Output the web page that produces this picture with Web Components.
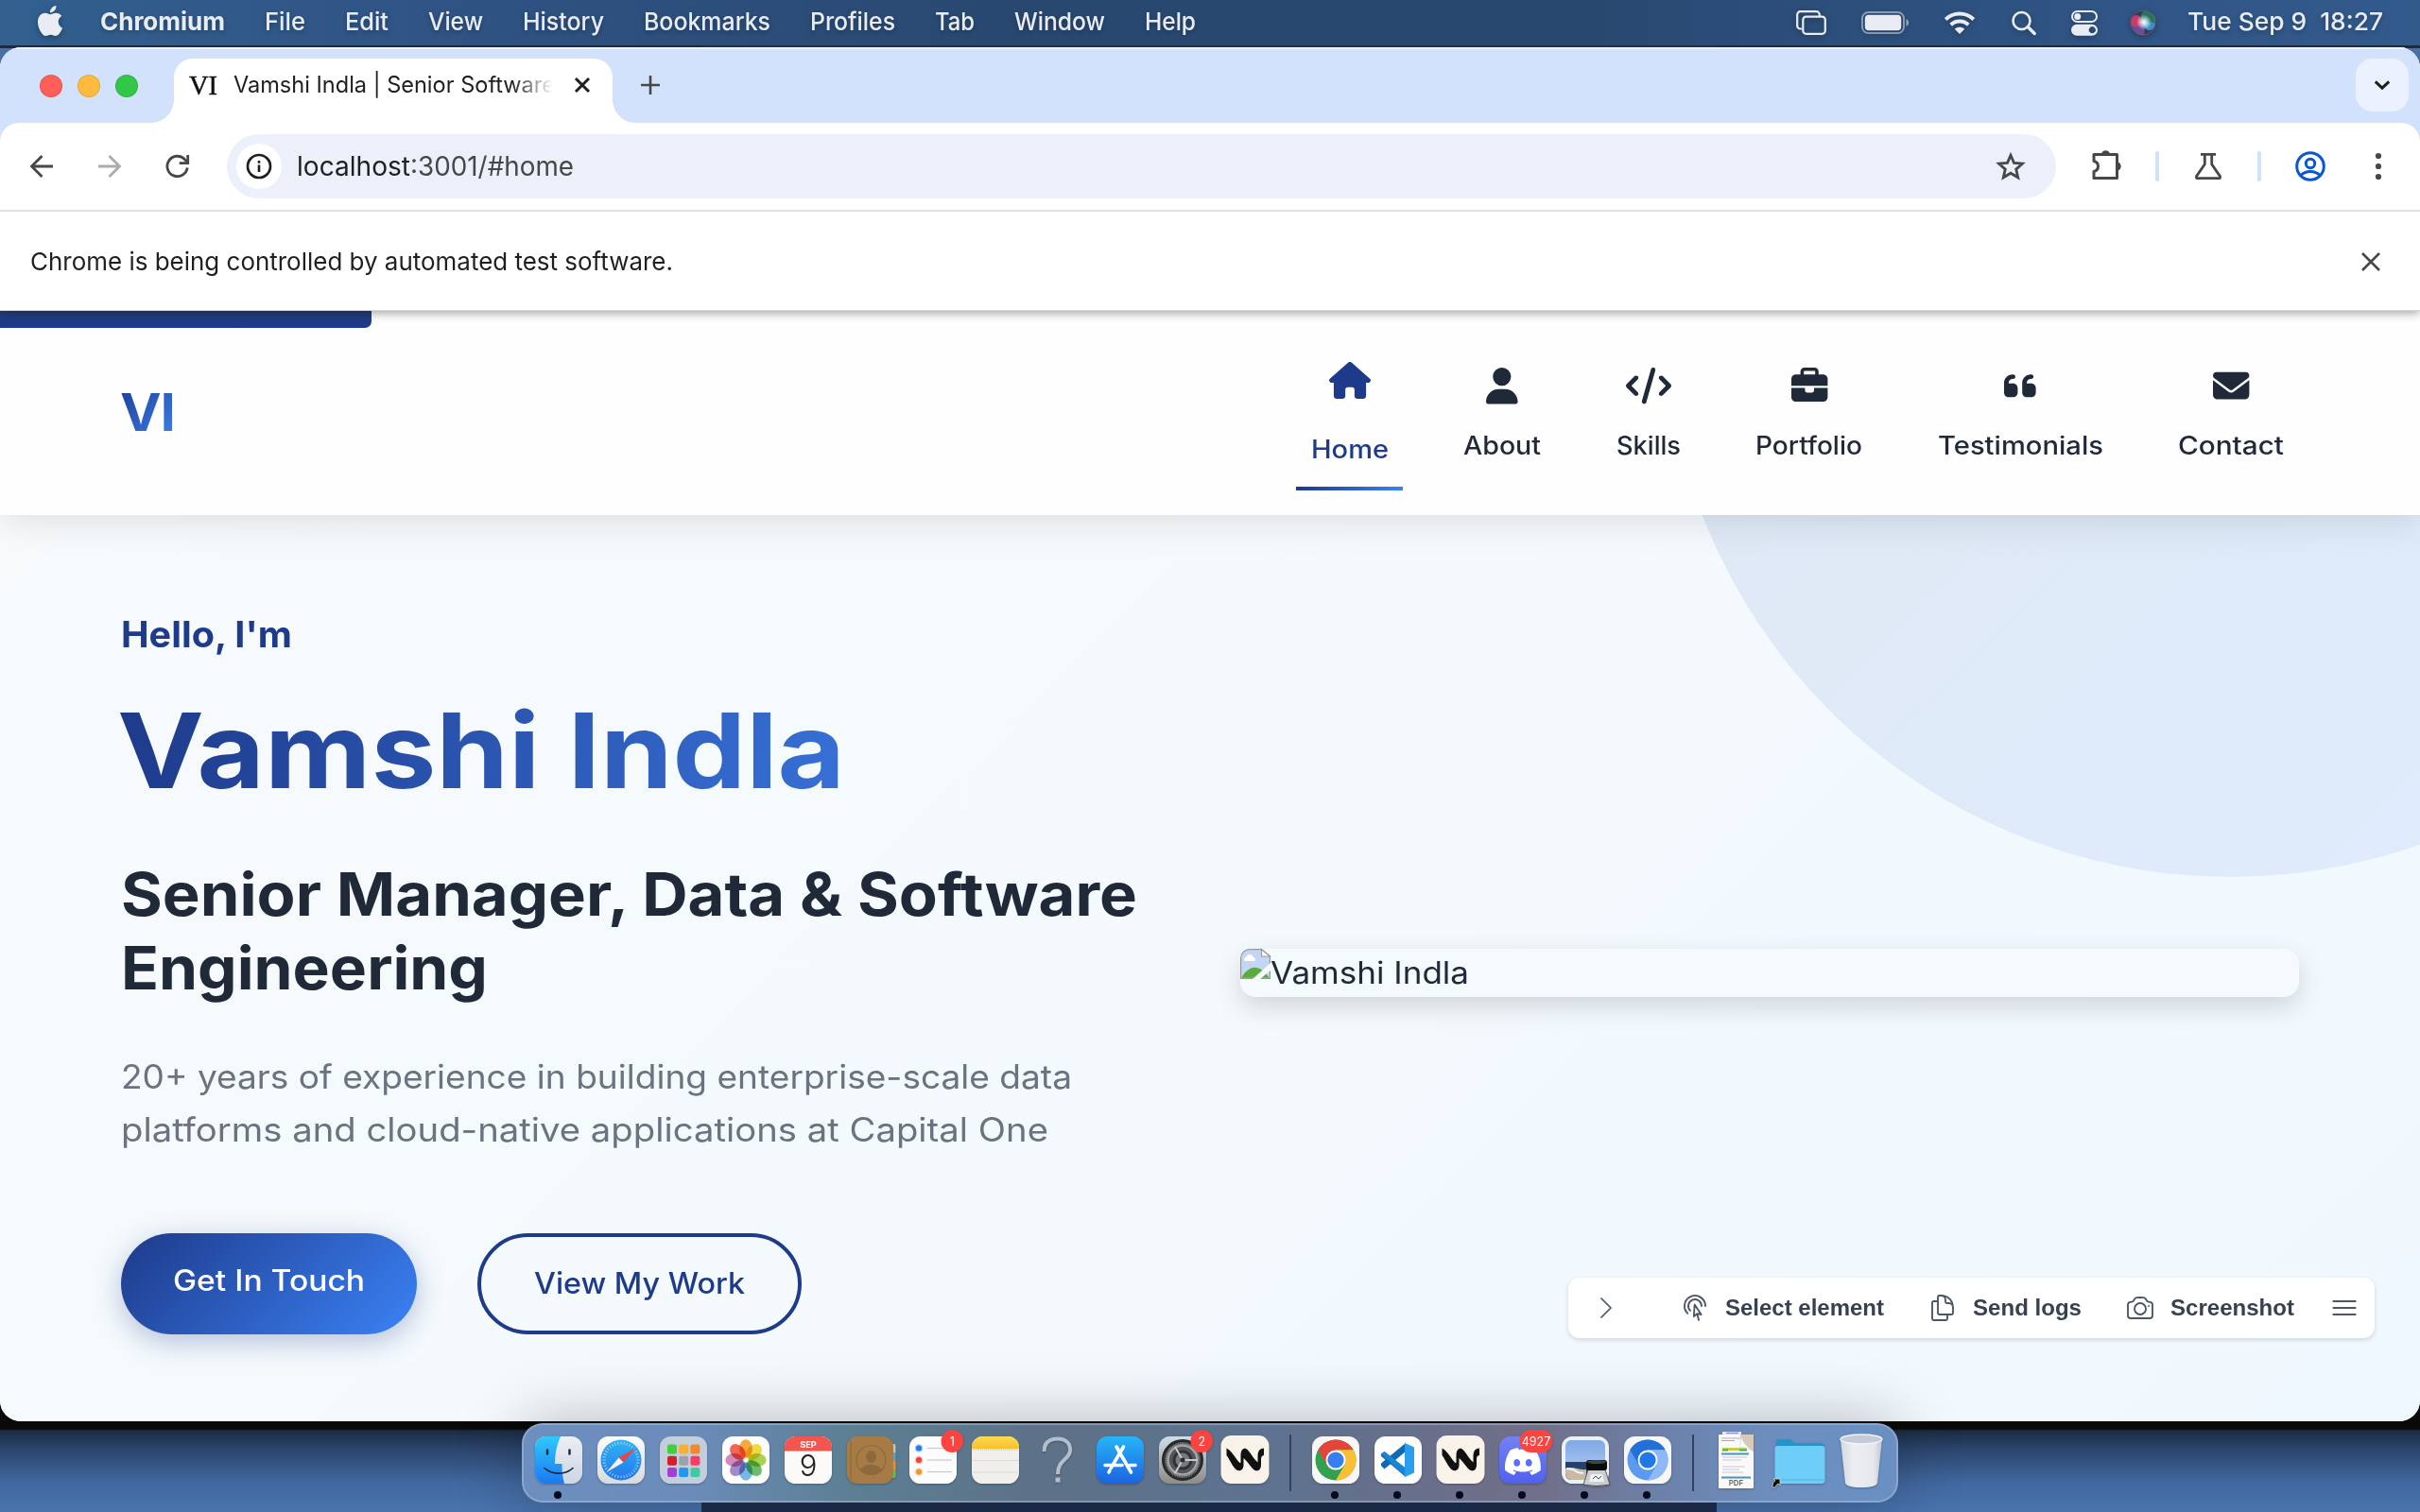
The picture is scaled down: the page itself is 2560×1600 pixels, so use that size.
<!DOCTYPE html>
<html lang="en">
<head>
<meta charset="utf-8">
<title>Vamshi Indla | Senior Software</title>
<style>
html,body{margin:0;width:2560px;height:1600px;overflow:hidden;font-family:Inter,"Liberation Sans",sans-serif}
</style>
</head>
<body>
<desk-top></desk-top>
<script>
const define = (name, html, setup) => customElements.define(name, class extends HTMLElement {
  connectedCallback() {
    if (this.shadowRoot) return;
    const root = this.attachShadow({mode: 'open'});
    root.innerHTML = typeof html === 'function' ? html(this) : html;
    if (setup) setup(this, root);
  }
});

const st = (d, w = 2, extra = '') => `<path d="${d}" fill="none" stroke="currentColor" stroke-width="${w}" ${extra}/>`;
const fl = d => `<path d="${d}" fill="currentColor"/>`;
const rr = 'stroke-linecap="round" stroke-linejoin="round"';
const ICONS = {
  apple: ['0 0 24 24', fl('M12.152 6.896c-.948 0-2.415-1.078-3.96-1.04-2.04.027-3.91 1.183-4.961 3.014-2.117 3.675-.546 9.103 1.519 12.09 1.013 1.454 2.208 3.09 3.792 3.039 1.52-.065 2.09-.987 3.935-.987 1.831 0 2.35.987 3.96.948 1.637-.026 2.676-1.48 3.676-2.948 1.156-1.688 1.636-3.325 1.662-3.415-.039-.013-3.182-1.221-3.22-4.857-.026-3.04 2.48-4.494 2.597-4.559-1.429-2.09-3.623-2.324-4.39-2.376-2-.156-3.675 1.09-4.61 1.09zM15.53 3.83c.843-1.012 1.4-2.427 1.245-3.83-1.207.052-2.662.805-3.532 1.818-.78.896-1.454 2.338-1.273 3.714 1.338.104 2.715-.688 3.559-1.701')],
  screens: ['0 0 32 26', st('M6 19.5H4.5a3.3 3.3 0 0 1-3.3-3.3V4.500a3.300 3.300 0 0 1 3.300-3.300h17a3.300 3.300 0 0 1 3.300 3.300V6', 2.2) + '<rect x="7.300" y="6.600" width="23.500" height="18.200" rx="3.300" fill="none" stroke="currentColor" stroke-width="2.200"/>'],
  battery: ['0 0 52 24', '<rect x="1" y="1" width="44" height="22" rx="6.500" fill="none" stroke="currentColor" stroke-width="2" opacity=".5"/><rect x="3.800" y="3.800" width="38.400" height="16.400" rx="4" fill="currentColor"/><path d="M47.500 8v8c3.500-1.500 3.500-6.500 0-8z" fill="currentColor" opacity=".55"/>'],
  wifi: ['0 0 34 25', st('M2.200 9.500c8.200-8 21.400-8 29.600 0', 4) + st('M7.700 15.200c5.200-5 13.400-5 18.600 0', 4) + fl('M17 25l-5.200-5.300c2.900-2.600 7.500-2.600 10.400 0z')],
  search: ['0 0 28 27', '<circle cx="11.500" cy="11" r="9" fill="none" stroke="currentColor" stroke-width="2.600"/>' + st('M18.200 17.500l7 7', 3.400, rr)],
  control: ['0 0 28 27', '<rect x="1" y="1" width="26" height="11" rx="5.500" fill="none" stroke="currentColor" stroke-width="2"/><circle cx="6.700" cy="6.500" r="3.500" fill="currentColor"/><path fill-rule="evenodd" d="M6 14.700h16a6 6 0 0 1 0 12H6a6 6 0 0 1 0-12zm16.300 2.400a3.600 3.600 0 1 0 .01 0z" fill="currentColor"/>'],
  siri: ['0 0 28 28', '<defs><radialGradient id="s"><stop offset="0" stop-color="#fff"/><stop offset=".3" stop-color="#dff" stop-opacity=".8"/><stop offset="1" stop-color="#fff" stop-opacity="0"/></radialGradient></defs><circle cx="14" cy="14" r="13.500" fill="#2b3f5c"/><path d="M14 14C10 2 3 5 .8 13c1 8 8 9 13.200 1z" fill="#c93a68"/><path d="M14 14C9 4 14 0 20 2.500c8 3 9 9 6 12.500-5 1-9 0-12-1z" fill="#27735f"/><path d="M14 14c10-1 13 0 13 2-3 9-11 8-13-2z" fill="#3b8fc8"/><path d="M14 14c3 8 2 13-1 13C6 26 3 20 2.500 18c5 1 9 0 11.500-4z" fill="#6d4d96"/><circle cx="15" cy="13.500" r="8" fill="url(#s)"/><circle cx="14" cy="14" r="13" fill="none" stroke="#8d5a80" opacity=".8"/>'],
  x: ['0 0 20 20', st('M3 3l14 14M17 3L3 17', 3)],
  xthin: ['0 0 20 20', st('M1 1l18 18M19 1L1 19', 2.600)],
  plus: ['0 0 22 22', st('M11 1v20M1 11h20', 2.600)],
  down: ['0 0 20 14', st('M2 2.500l8 7.500 8-7.500', 3.400)],
  back: ['0 0 26 26', st('M25 13H3M13.500 2L2.500 13l11 11', 2.800)],
  fwd: ['0 0 26 26', st('M1 13h22M12.500 2l11 11-11 11', 2.800)],
  reload: ['0 0 26 26', st('M23.200 14.500A10.700 10.700 0 1 1 20.500 5.700L23 8.200', 2.800) + st('M23.700 1v8.600h-9', 2.800)],
  info: ['0 0 28 28', '<circle cx="14" cy="14" r="12" fill="none" stroke="currentColor" stroke-width="2.700"/>' + fl('M12.700 12.500h2.600V20h-2.600zM12.700 8h2.600v2.700h-2.600z')],
  star: ['0 0 32 32', st('M16 4.200l3.500 8.200 8.900.800-6.700 5.900 2 8.700L16 23.200l-7.700 4.600 2-8.700-6.700-5.900 8.900-.800z', 2.800)],
  puzzle: ['0 0 34 34', st('M3 6.500h24.500v25H3V24.500c6-1.500 6-9.500 0-11z', 3, 'stroke-linejoin="round"') + fl('M11 6a4.600 4.600 0 0 1 9 0zM28 14.500a4.600 4.600 0 0 1 0 9z')],
  flask: ['0 0 30 30', st('M7 2.300h16M11.300 2.500v10.200L2.600 25.500q-.8 2.200 1.400 2.200h22q2.200 0 1.400-2.200L18.700 12.700V2.500', 2.800)],
  profile: ['0 0 32 32', '<circle cx="16" cy="16" r="14.300" fill="none" stroke="currentColor" stroke-width="3"/><circle cx="16" cy="13" r="4.700" fill="none" stroke="currentColor" stroke-width="3"/>' + st('M6 25.500c5-5.500 15-5.500 20 0', 3)],
  dots: ['0 0 8 30', '<g fill="currentColor"><circle cx="4" cy="4" r="3.100"/><circle cx="4" cy="15" r="3.100"/><circle cx="4" cy="26" r="3.100"/></g>'],
  home: ['0 0 576 512', fl('M575.8 255.5c0 18-15 32.1-32 32.1h-32l.7 160.2c0 2.700-.2 5.400-.5 8.100V472c0 22.100-17.900 40-40 40H456c-1.100 0-2.200 0-3.300-.1c-1.400 .1-2.800 .1-4.200 .1H416 392c-22.100 0-40-17.900-40-40V448 384c0-17.700-14.300-32-32-32H256c-17.700 0-32 14.300-32 32v64 24c0 22.100-17.900 40-40 40H160 128.100c-1.500 0-3-.1-4.500-.2c-1.200 .1-2.400 .2-3.600 .2H104c-22.100 0-40-17.900-40-40V360c0-.9 0-1.900 .1-2.800V287.600H32c-18 0-32-14-32-32.100c0-9 3-17 10-24L266.400 8c7-7 15-8 22-8s15 2 21 7L564.800 231.500c8 7 12 15 11 24z')],
  user: ['0 0 448 512', fl('M224 256A128 128 0 1 0 224 0a128 128 0 1 0 0 256zm-45.7 48C79.8 304 0 383.8 0 482.300C0 498.700 13.300 512 29.700 512H418.300c16.400 0 29.700-13.300 29.700-29.700C448 383.800 368.200 304 269.700 304H178.300z')],
  code: ['0 0 640 512', fl('M392.8 1.2c-17-4.9-34.7 5-39.6 22l-128 448c-4.900 17 5 34.700 22 39.600s34.700-5 39.600-22l128-448c4.900-17-5-34.700-22-39.600zm80.600 120.100c-12.500 12.500-12.500 32.800 0 45.300L562.700 256l-89.400 89.400c-12.500 12.500-12.500 32.800 0 45.300s32.800 12.500 45.300 0l112-112c12.500-12.500 12.500-32.800 0-45.300l-112-112c-12.500-12.500-32.800-12.500-45.300 0zm-306.700 0c-12.500-12.500-32.800-12.500-45.300 0l-112 112c-12.500 12.500-12.500 32.800 0 45.300l112 112c12.500 12.500 32.800 12.500 45.300 0s12.500-32.800 0-45.300L77.300 256l89.400-89.400c12.500-12.500 12.500-32.800 0-45.300z')],
  briefcase: ['0 0 512 512', fl('M184 48H328c4.400 0 8 3.600 8 8V96H176V56c0-4.400 3.600-8 8-8zm-56 8V96H64C28.700 96 0 124.700 0 160v96H192 320 512V160c0-35.300-28.700-64-64-64H384V56c0-30.900-25.100-56-56-56H184c-30.900 0-56 25.100-56 56zM512 288H320v32c0 17.700-14.300 32-32 32H224c-17.700 0-32-14.300-32-32V288H0V416c0 35.300 28.700 64 64 64H448c35.300 0 64-28.700 64-64V288z')],
  quote: ['0 0 448 512', fl('M0 216C0 149.700 53.700 96 120 96h8c17.700 0 32 14.300 32 32s-14.300 32-32 32h-8c-30.900 0-56 25.100-56 56v8h64c35.300 0 64 28.700 64 64v64c0 35.300-28.700 64-64 64H64c-35.300 0-64-28.700-64-64V320 288 216zm256 0c0-66.300 53.700-120 120-120h8c17.700 0 32 14.300 32 32s-14.300 32-32 32h-8c-30.900 0-56 25.100-56 56v8h64c35.300 0 64 28.700 64 64v64c0 35.300-28.700 64-64 64H320c-35.300 0-64-28.700-64-64V320 288 216z')],
  mail: ['0 0 512 512', fl('M48 64C21.500 64 0 85.500 0 112c0 15.100 7.100 29.300 19.200 38.400L236.800 313.600c11.400 8.500 27 8.500 38.400 0L492.800 150.400c12.100-9.100 19.200-23.300 19.200-38.400c0-26.500-21.500-48-48-48H48zM0 176V384c0 35.300 28.700 64 64 64H448c35.300 0 64-28.700 64-64V176L294.400 339.200c-22.800 17.100-54 17.100-76.800 0L0 176z')],
  chev: ['0 0 24 24', st('M8.250 4.500l7.500 7.500-7.500 7.500', 1.300, rr)],
  cursor: ['0 0 24 24', st('M15.042 21.672 13.684 16.600m0 0-2.510 2.225.569-9.470 5.227 7.917-3.286-.672Zm-7.518-.267A8.250 8.250 0 1 1 20.250 10.500M8.288 14.212A5.250 5.250 0 1 1 17.250 10.500', 1.400, rr)],
  docs: ['0 0 24 24', st('M15.750 17.250v3.375c0 .621-.504 1.125-1.125 1.125h-9.750a1.125 1.125 0 0 1-1.125-1.125V7.875c0-.621.504-1.125 1.125-1.125H6.750a9.060 9.060 0 0 1 1.500.124m7.500 10.376h3.375c.621 0 1.125-.504 1.125-1.125V11.250c0-4.460-3.243-8.161-7.500-8.876a9.060 9.060 0 0 0-1.500-.124H9.375c-.621 0-1.125.504-1.125 1.125v3.500m7.500 10.375H9.375a1.125 1.125 0 0 1-1.125-1.125v-9.250m12 6.625v-1.875a3.375 3.375 0 0 0-3.375-3.375h-1.500a1.125 1.125 0 0 1-1.125-1.125v-1.500a3.375 3.375 0 0 0-3.375-3.375H9.750', 1.400, rr)],
  camera: ['0 0 24 24', st('M6.827 6.175A2.310 2.310 0 0 1 5.186 7.230c-.380.054-.757.112-1.134.175C2.999 7.580 2.250 8.507 2.250 9.574V18a2.250 2.250 0 0 0 2.250 2.250h15A2.250 2.250 0 0 0 21.750 18V9.574c0-1.067-.750-1.994-1.802-2.169a47.865 47.865 0 0 0-1.134-.175 2.310 2.310 0 0 1-1.640-1.055l-.822-1.316a2.192 2.192 0 0 0-1.736-1.039 48.774 48.774 0 0 0-5.232 0 2.192 2.192 0 0 0-1.736 1.039l-.821 1.316ZM16.500 12.750a4.500 4.500 0 1 1-9 0 4.500 4.500 0 0 1 9 0ZM18.750 10.500h.008v.008h-.008V10.500Z', 1.400, rr)],
  menu: ['0 0 24 24', st('M3.300 6.750h17.400M3.300 12h17.400M3.300 17.250h17.400', 1.500, rr)],
  broken: ['0 0 32 32', '<path d="M.6 10A9.400 9.400 0 0 1 10 .6h12.500L31.400 8v23.400H.6z" fill="#c4d6f5" stroke="#9a9a9a" stroke-width="1.200"/><path d="M4.500 13c-1.500-3 1-4.500 2-4 0-4 7-4 7 0 3-.5 3.500 4 1 4z" fill="#fff"/><path d="M1.200 30.800C9 17 20 15 30.800 30.800z" fill="#5aab3c"/><path d="M22.500.6V8h8.900z" fill="#fff" stroke="#9a9a9a" stroke-width="1.200"/><path d="M13 32L32 15v8L21 32z" fill="#f6fafd"/>'],
};
define('ui-icon', el => {
  const [vb, body] = ICONS[el.getAttribute('name')];
  return `<style>:host{display:block;flex:none;line-height:0}svg{display:block;overflow:visible}</style><svg width="${el.getAttribute('w')}" height="${el.getAttribute('h')}" viewBox="${vb}">${body}</svg>`;
});

/* Single line of text set to an exact measure. */
define('fit-text', `<style>:host{display:block;flex:none;white-space:pre}
span{display:inline-block;white-space:pre;transform-origin:0 50%}
:host([grad]) span{background:var(--grad);-webkit-background-clip:text;background-clip:text;color:transparent}</style><span><slot></slot></span>`, (el, root) => {
  const w = +el.getAttribute('w'), span = root.querySelector('span');
  const natural = span.getBoundingClientRect().width;
  el.style.width = w + 'px';
  if (natural) span.style.transform = `scaleX(${w / natural})`;
});

define('menu-bar', `<style>:host{display:flex;align-items:center;height:48px;padding:0 39px 0 37px;box-sizing:border-box;color:#e9edf3;font-size:26px;line-height:44px;
background:linear-gradient(90deg,#32608f 0,#305587 15%,#294870 42%,#294870 65%,#305687 88%,#335a8c 100%);text-shadow:0 2px 5px rgba(0,0,0,.3)}
.m,.r{display:flex;align-items:center}.m{gap:42px;margin:-2px 0 0 37px;font-weight:500}.m :first-child{font-weight:700}.r{margin-left:auto}
ui-icon{filter:drop-shadow(0 2px 3px rgba(0,0,0,.3))}</style>
<ui-icon name="apple" w="32" h="32" style="margin-top:-4px"></ui-icon>
<div class="m"><fit-text w="132">Chromium</fit-text><fit-text w="43">File</fit-text><fit-text w="46">Edit</fit-text><fit-text w="58">View</fit-text><fit-text w="86">History</fit-text><fit-text w="134">Bookmarks</fit-text><fit-text w="90">Profiles</fit-text><fit-text w="42">Tab</fit-text><fit-text w="96">Window</fit-text><fit-text w="54">Help</fit-text></div>
<div class="r"><ui-icon name="screens" w="32" h="26"></ui-icon><ui-icon name="battery" w="52" h="24" style="margin-left:37px"></ui-icon><ui-icon name="wifi" w="34" h="25" style="margin:-2px 0 0 35px"></ui-icon><ui-icon name="search" w="28" h="27" style="margin-left:37px"></ui-icon><ui-icon name="control" w="28" h="27" style="margin-left:36px"></ui-icon><ui-icon name="siri" w="28" h="28" style="margin-left:34px"></ui-icon><fit-text w="207" style="margin:-2px 0 0 33px;font-weight:500">Tue Sep 9  18:27</fit-text></div>`);

define('tab-strip', `<style>:host{display:flex;height:80px;box-sizing:border-box;padding:12px 12px 0 42px;background:#d3e2fc;box-shadow:inset 0 2px #eef4fe;align-items:flex-start}
.l{display:flex;gap:16px;padding-top:17px;width:142px}.l i{width:24px;height:24px;border-radius:50%;box-sizing:border-box;border:1px solid rgba(0,0,0,.1)}
.tab{position:relative;width:464px;height:68px;background:#fff;border-radius:20px 20px 0 0;display:flex;align-items:center;box-sizing:border-box;padding:0 22px 12px 16px;line-height:40px}
.tab:before,.tab:after{content:"";position:absolute;bottom:0;width:24px;height:24px}
.tab:before{left:-24px;background:radial-gradient(circle at 0 0,transparent 23.500px,#fff 24px)}.tab:after{right:-24px;background:radial-gradient(circle at 100% 0,transparent 23.500px,#fff 24px)}
.fav{font:30px "Liberation Serif",serif;line-height:40px;color:#111;-webkit-text-stroke:.5px #111}
.t{margin-left:17px;font-size:24px;color:#1f1f1f;-webkit-mask:linear-gradient(90deg,#000 295px,transparent 338px);mask:linear-gradient(90deg,#000 295px,transparent 338px)}
.s{margin-left:auto;width:56px;height:56px;border-radius:18px;background:#ebf2fe;display:flex;align-items:center;justify-content:center;color:#1f1f1f}</style>
<div class="l"><i style="background:#fe5f58"></i><i style="background:#febb3e"></i><i style="background:#32c748"></i></div>
<div class="tab"><fit-text class="fav" w="30">VI</fit-text><div class="t"><fit-text w="340">Vamshi Indla | Senior Software</fit-text></div><ui-icon name="x" w="20" h="20" style="margin-left:auto;color:#1f1f1f"></ui-icon></div>
<ui-icon name="plus" w="22" h="22" style="margin:17px 0 0 29px;color:#474747"></ui-icon>
<div class="s"><ui-icon name="down" w="18" h="13"></ui-icon></div>`);

define('tool-bar', `<style>:host{display:block;background:#d3e2fc}
.b{display:flex;align-items:center;height:94px;box-sizing:border-box;border-bottom:2px solid #dfe1e3;background:#fff;border-radius:20px 20px 0 0;padding:0 40px 0 31px;color:#474747}
.o{display:flex;align-items:center;width:1936px;height:68px;border-radius:34px;background:#ecf0fa;margin-left:39px;box-sizing:border-box;padding:0 32px 0 10px}
.c{width:48px;height:48px;border-radius:50%;background:#fff;display:flex;align-items:center;justify-content:center;color:#1f1f1f}
.u{display:flex;margin-left:16px;font-size:28px;line-height:48px}
hr{width:4px;height:32px;border:0;border-radius:2px;background:#d0e1fb;margin:0}</style>
<div class="b"><ui-icon name="back" w="26" h="26"></ui-icon><ui-icon name="fwd" w="26" h="26" style="margin-left:46px;color:#acacac"></ui-icon><ui-icon name="reload" w="26" h="26" style="margin-left:46px"></ui-icon>
<div class="o"><div class="c"><ui-icon name="info" w="28" h="28"></ui-icon></div><div class="u"><fit-text w="120" style="color:#1f1f1f">localhost</fit-text><fit-text w="173">:3001/#home</fit-text></div><ui-icon name="star" w="32" h="32" style="margin-left:auto"></ui-icon></div>
<ui-icon name="puzzle" w="34" h="34" style="margin:-4px 0 0 37px"></ui-icon><hr style="margin-left:34px"><ui-icon name="flask" w="30" h="30" style="margin-left:37px"></ui-icon><hr style="margin-left:37px"><ui-icon name="profile" w="32" h="32" style="margin-left:36px;color:#0b57d0"></ui-icon><ui-icon name="dots" w="8" h="30" style="margin-left:52px"></ui-icon></div>`);

define('info-bar', `<style>:host{display:flex;position:relative;z-index:3;height:105px;margin-bottom:-1px;box-sizing:border-box;align-items:center;justify-content:space-between;padding:2px 42px 0 32px;background:#fff;font-size:26px;line-height:40px;color:#1f1f1f;border-bottom:1px solid #d4d6d8;box-shadow:0 2px 10px rgba(0,0,0,.38);clip-path:inset(0 0 -20px 0)}</style>
<fit-text w="680">Chrome is being controlled by automated test software.</fit-text><ui-icon name="xthin" w="20" h="20" style="color:#474747"></ui-icon>`);

define('nav-item', el => `<style>:host{display:flex;flex-direction:column;align-items:center;width:${el.getAttribute('box')}px;padding-top:56px;color:#1f2937;font-size:26.500px;font-weight:550;line-height:32px}
.i{height:48px;display:flex;align-items:center;margin-bottom:22.500px}
:host([active]){padding-top:50.500px;color:#1e3a8a}:host([active]) .i{margin-bottom:32px}
:host([active]):after{content:"";width:100%;height:4px;margin-top:24.500px;background:linear-gradient(90deg,#1e3a8a,#3b82f6)}</style>
<div class="i"><ui-icon name="${el.getAttribute('icon')}" w="${el.getAttribute('iw')}" h="${el.hasAttribute('active') ? 39 : 38.4}"></ui-icon></div><fit-text w="${el.getAttribute('tw')}">${el.getAttribute('label')}</fit-text>`);

define('site-header', `<style>:host{display:flex;position:relative;z-index:2;height:217px;box-sizing:border-box;padding:0 128px;justify-content:space-between;background:#fefefe;box-shadow:0 4px 40px rgba(0,0,0,.12)}
.p{position:absolute;left:0;top:0;width:393px;height:19px;background:linear-gradient(#263f7c,#1e3a8a);border-radius:0 0 7px 0}
.logo{--grad:linear-gradient(135deg,#1f3f93,#3b80f0);font-size:55px;font-weight:750;line-height:56px;margin:80px 0 0 -1px;letter-spacing:-1px}
nav{display:flex;gap:47.400px;align-items:flex-start}</style>
<div class="p"></div><fit-text class="logo" grad w="58">VI</fit-text>
<nav><nav-item active box="113" icon="home" iw="44" tw="82" label="Home"></nav-item><nav-item box="115" icon="user" iw="33.600" tw="82" label="About"></nav-item><nav-item box="100" icon="code" iw="48" tw="68" label="Skills"></nav-item><nav-item box="145" icon="briefcase" iw="38.400" tw="113" label="Portfolio"></nav-item><nav-item box="207" icon="quote" iw="33.600" tw="175" label="Testimonials"></nav-item><nav-item box="144" icon="mail" iw="38.400" tw="112" label="Contact"></nav-item></nav>`);

define('pill-button', `<style>:host{display:flex;box-sizing:border-box;height:107px;border-radius:54px;align-items:center;justify-content:center;font-size:31px;font-weight:550;line-height:40px;width:343px;border:4px solid #1e3a8a;color:#1e3a8a}
:host([primary]){width:313px;border:0;padding-bottom:6px;color:#fff;background:linear-gradient(135deg,#1e3a8a,#3b82f6);box-shadow:0 8px 30px rgba(30,58,138,.3)}</style><slot></slot>`);

define('hero-section', `<style>:host{display:flex;position:relative;flex:1;padding:0 128px;background:linear-gradient(135deg,#f8fafc,#f5fafd 35%,#f0f8ff);color:#1f2937;overflow:hidden}
.circle{position:absolute;left:1760px;top:-817px;width:1200px;height:1200px;border-radius:50%;background:linear-gradient(135deg,#1e3a8a,#3b82f6);opacity:.1}
.l{width:1184px;display:flex;flex-direction:column}
.h{margin-top:96px;font-size:38.500px;font-weight:650;line-height:60px;color:#1e3a8a}
.n{margin:33px 0 0 -4px;font-size:110px;font-weight:750;line-height:120px;--grad:linear-gradient(100deg,#1e3a8a,#3770d6)}
.s{font-size:63px;font-weight:650;line-height:77.500px;margin-top:54.200px}
.p{font-size:35px;line-height:56px;margin-top:48.300px;color:#6b7280}
.b{display:flex;gap:64px;margin-top:81.500px}
.img{position:relative;width:1120px;height:51px;margin-top:459px;border-radius:16px;box-shadow:0 10px 28px rgba(0,0,0,.15);background:#f5fafd;display:flex;font-size:32px;line-height:51px}</style>
<div class="circle"></div>
<div class="l"><fit-text class="h" w="181">Hello, I'm</fit-text><fit-text class="n" grad w="770">Vamshi Indla</fit-text>
<div class="s"><fit-text w="1075">Senior Manager, Data &amp; Software</fit-text><fit-text w="388">Engineering</fit-text></div>
<div class="p"><fit-text w="1006">20+ years of experience in building enterprise-scale data</fit-text><fit-text w="981">platforms and cloud-native applications at Capital One</fit-text></div>
<div class="b"><pill-button primary><fit-text w="203">Get In Touch</fit-text></pill-button><pill-button><fit-text w="223">View My Work</fit-text></pill-button></div></div>
<div class="img"><ui-icon name="broken" w="32" h="32"></ui-icon><fit-text w="210">Vamshi Indla</fit-text></div>`);

define('dev-toolbar', `<style>:host{position:absolute;z-index:4;left:1659px;top:1302px;width:853px;height:64px;box-sizing:border-box;padding:0 16px 0 24px;border-radius:12px;background:#fff;box-shadow:0 2px 5px rgba(0,0,0,.14);display:flex;align-items:center;color:#374151;font:bold 24px/40px "Liberation Sans",sans-serif}
ui-icon{color:#4b5563}</style>
<ui-icon name="chev" w="32" h="32"></ui-icon><ui-icon name="cursor" w="32" h="32" style="margin-left:62px"></ui-icon><fit-text w="168" style="margin-left:16px">Select element</fit-text><ui-icon name="docs" w="32" h="32" style="margin-left:46px"></ui-icon><fit-text w="115" style="margin-left:16px">Send logs</fit-text><ui-icon name="camera" w="32" h="32" style="margin-left:46px"></ui-icon><fit-text w="131" style="margin-left:16px">Screenshot</fit-text><ui-icon name="menu" w="32" h="32" style="margin-left:auto"></ui-icon>`);

define('browser-window', `<style>:host{display:flex;flex-direction:column;position:relative;margin-top:2px;height:1454px;border-radius:22px;overflow:hidden;background:#fff}</style>
<tab-strip></tab-strip><tool-bar></tool-bar><info-bar></info-bar><site-header></site-header><hero-section></hero-section><dev-toolbar></dev-toolbar>`);

const tile = f => `<rect width="50" height="50" rx="11.500" fill="${f}"/>`;
const lg = (id, a, b) => `<linearGradient id="${id}" x2="0" y2="1"><stop stop-color="${a}"/><stop offset="1" stop-color="${b}"/></linearGradient>`;
const badge = (t, x, w) => `<rect x="${x}" y="-7" width="${w}" height="24" rx="12" fill="#fb4340"/><text x="${x + w / 2}" y="9.500" font-size="12.500" fill="#fff" text-anchor="middle">${t}</text>`;
const petals = ['#f7a12b', '#f2d92b', '#a5cd45', '#5db75b', '#6bb1e6', '#9b7fc4', '#cf7fb5', '#f2563e'].map((c, i) => `<ellipse cx="25" cy="13" rx="7" ry="9.700" fill="${c}" opacity=".9" style="mix-blend-mode:multiply" transform="rotate(${i * 45} 25 25)"/>`).join('');
const cells = ['#3ed13c', '#fbb02b', '#f6872b', '#d42028', '#9aa4aa', '#fb3b66', '#a43fd6', '#2196f3', '#3ecba0'].map((c, i) => `<rect x="${8 + i % 3 * 12.2}" y="${8.500 + (i / 3 | 0) * 12.2}" width="10" height="10" rx="2.200" fill="${c}"/>`).join('');
const rows = [['#1f7bf5', 12.500], ['#f0413c', 25], ['#f49326', 37.500]].map(([c, y]) => `<circle cx="10" cy="${y}" r="4.300" fill="${c}" opacity=".35"/><circle cx="10" cy="${y}" r="3" fill="${c}"/><path d="M19 ${y}h26" stroke="#c9c9c9" stroke-width="1.200"/>`).join('');
const ticks = Array.from({length: 36}, (_, i) => `<path d="M25 5.500v3" stroke="#bfe2fb" stroke-width=".8" transform="rotate(${i * 10} 25 25)"/>`).join('');
const wmark = `<rect x="-.500" y="-1" width="51" height="51" rx="11" fill="#faf3ea"/><path d="M5.500 12.500C11 15 14 22 19 27.500c1.200 1 1.500.8 1.500-1V20c0-7 4.500-9 7.500-5.500 4 4.500 6 9 10.500 13V21c0-6 2.500-8.300 6.500-8.500V20c-2.500.5-3 2-3 5v5c0 7-5.500 8-9 4-3-3.500-6-8-9.500-11v7c0 7-6 8-9.500 3.500C10.500 29 8 23 5.500 20z" fill="#111"/>`;
const DOCK = {
  finder: `<defs>${lg('a', '#2fc9fb', '#1b79f2')}${lg('b', '#eceef3', '#cdd6e2')}<clipPath id="c"><rect width="50" height="50" rx="11.500"/></clipPath></defs><g clip-path="url(#c)"><rect width="50" height="50" fill="url(#b)"/><path d="M0 0h27c-4 9-6 18-6 29h7.500c0 7 .500 14 2.500 21H0z" fill="url(#a)"/><path d="M10 33.500c8 7.500 22 7.500 30 0" fill="none" stroke="#15263c" stroke-width="1.600" stroke-linecap="round"/><path d="M13 14.500v4M36.500 14.500v4" stroke="#15263c" stroke-width="2.400" stroke-linecap="round"/></g>`,
  safari: `<defs>${lg('a', '#2fb4f4', '#2277ec')}${lg('b', '#fdfdfd', '#d9dadb')}</defs>${tile('url(#b)')}<circle cx="25" cy="25" r="21.500" fill="url(#a)"/>${ticks}<path d="M41 12L22.500 22.500l5 5z" fill="#ed4543"/><path d="M9.500 38l13-15.500 5 5z" fill="#f3f3f3"/>`,
  launch: tile('#c3cedd') + cells,
  photos: tile('#fdfdfd') + `<g>${petals}</g><circle cx="25" cy="25" r="1.500" fill="#fff"/>`,
  cal: tile('#fbfaf9') + `<path d="M0 15.500V11.500A11.500 11.500 0 0 1 11.500 0h27A11.500 11.500 0 0 1 50 11.500v4z" fill="#f2564f"/><text x="25" y="11.500" font-size="9.200" font-weight="700" fill="#fff" text-anchor="middle">SEP</text><text x="25" y="42" font-size="31" font-weight="300" fill="#222" text-anchor="middle">9</text>`,
  contacts: `<path d="M45 8h4.500q2 0 2 2v7H45z" fill="#bfc5ba"/><path d="M45 17h6.500v9H45z" fill="#4ba7dc"/><path d="M45 26h6.500v9H45z" fill="#f28c28"/><path d="M45 35h6.500v7q0 2-3 2H45z" fill="#56c253"/><rect width="49" height="50" rx="11" fill="#a77b46"/><path d="M4 4v42" stroke="#916a3a" stroke-width="1.200"/><g fill="#8d6a3c"><circle cx="25.500" cy="25" r="15.500" fill="none" stroke="#8d6a3c" stroke-width="1.200"/><ellipse cx="25.500" cy="21.500" rx="5.500" ry="6.500"/><path d="M14 36c4-8.500 19-8.500 23 0-6 6-17 6-23 0z"/></g>`,
  remind: tile('#fcfcfc') + rows + badge('1', 33.500, 23.500),
  notes: `<defs>${lg('a', '#fcd94d', '#fbc12c')}</defs>` + tile('#f1efeb') + `<path d="M0 13V11.500A11.500 11.500 0 0 1 11.500 0h27A11.500 11.500 0 0 1 50 11.500V13z" fill="url(#a)"/><path d="M1 14h48" stroke="#bbb" stroke-dasharray="1 1"/><path d="M0 25.500h50M0 38h50" stroke="#dddbd8"/>`,
  help: `<path d="M10.500 16C10.500 6 16 2.500 25 2.500S38.500 8 38 15c-.500 10-13 9-13 25" fill="none" stroke="#b5bfcc" stroke-width="4"/><rect x="22.500" y="43.500" width="5" height="5" fill="#b5bfcc"/>`,
  store: `<defs>${lg('a', '#25b5f8', '#1b63df')}</defs>` + tile('url(#a)') + `<path d="M21 11l15.500 27M28.500 11L15.500 33M9 30.500h18M35 30.500h6M14 36l-1 2" stroke="#fff" stroke-width="3.600" stroke-linecap="round"/>`,
  gear: `<defs>${lg('a', '#cfdde6', '#8f8c88')}</defs>` + tile('url(#a)') + `<circle cx="25" cy="25" r="20.500" fill="#888" stroke="#252628" stroke-width="3"/><circle cx="25" cy="25" r="19" fill="none" stroke="#333" stroke-width="3" stroke-dasharray="1 .8"/><circle cx="25" cy="25" r="15" fill="#55575a" stroke="#a9b0b5" stroke-width="1.500"/><circle cx="25" cy="25" r="9" fill="#777a7d" stroke="#303234" stroke-width="3"/><path d="M25 25h16M25 25l-8-14M25 25l-8 14" stroke="#c2c8cc" stroke-width="2"/><circle cx="25" cy="25" r="2.500" fill="#2a2c2e"/>` + badge('2', 33.500, 23.500),
  wave: wmark,
  chrome: tile('#f7f7f7') + `<circle cx="25" cy="25" r="21.500" fill="#34a04f"/><path d="M6.400 14.200A21.500 21.500 0 0 1 43.600 14.200H25L15.700 30.400z" fill="#e3453a"/><path d="M43.600 14.200A21.500 21.500 0 0 1 25 46.500L34.300 30.400 25 14.200z" fill="#fbbf33"/><circle cx="25" cy="25" r="10.500" fill="#fff"/><circle cx="25" cy="25" r="8.600" fill="#377ef0"/>`,
  code: tile('#fdfdfd') + `<path d="M7 18.500l3.500-2.500L33 34v9L7 21z" fill="#1272bd"/><path d="M7 31l3.500 3.500L33 16V7L7 28.500z" fill="#0f6ab3"/><path d="M7 18.500l3.500-2.500L33 33.500v9z" fill="#1a85d3"/><path d="M32 7l10 4.500v27L32 43z" fill="#2a9df0"/>`,
  discord: `<defs>${lg('a', '#7381f3', '#5161ee')}</defs>` + tile('url(#a)') + `<path transform="translate(6 7.500) scale(1.580)" fill="#fff" d="M20.317 4.370a19.791 19.791 0 00-4.885-1.515.0741.0741 0 00-.0785.0371c-.211.3753-.4447.8648-.6083 1.2495-1.8447-.2762-3.680-.2762-5.4868 0-.1636-.3933-.4058-.8742-.6177-1.2495a.077.077 0 00-.0785-.037 19.7363 19.7363 0 00-4.8852 1.515.0699.0699 0 00-.0321.0277C.5334 9.0458-.319 13.5799.0992 18.0578a.0824.0824 0 00.0312.0561c2.0528 1.5076 4.0413 2.4228 5.9929 3.0294a.0777.0777 0 00.0842-.0276c.4616-.6304.8731-1.2952 1.226-1.9942a.076.076 0 00-.0416-.1057c-.6528-.2476-1.2743-.5495-1.8722-.8923a.077.077 0 01-.0076-.1277c.1258-.0943.2517-.1923.3718-.2914a.0743.0743 0 01.0776-.0105c3.9278 1.7933 8.180 1.7933 12.0614 0a.0739.0739 0 01.0785.0095c.1202.099.246.1981.3728.2924a.077.077 0 01-.0066.1276 12.2986 12.2986 0 01-1.873.8914.0766.0766 0 00-.0407.1067c.3604.698.7719 1.3628 1.225 1.9932a.076.076 0 00.0842.0286c1.961-.6067 3.9495-1.5219 6.0023-3.0294a.077.077 0 00.0313-.0552c.5004-5.177-.8382-9.6739-3.5485-13.6604a.061.061 0 00-.0312-.0286zM8.020 15.3312c-1.1825 0-2.1569-1.0857-2.1569-2.419 0-1.3332.9555-2.4189 2.157-2.4189 1.2108 0 2.1757 1.0952 2.1568 2.419 0 1.3332-.9555 2.4189-2.1569 2.4189zm7.9748 0c-1.1825 0-2.1569-1.0857-2.1569-2.419 0-1.3332.9554-2.4189 2.1569-2.4189 1.2108 0 2.1757 1.0952 2.1568 2.419 0 1.3332-.946 2.4189-2.1568 2.4189Z"/>` + badge('4927', 21.500, 35),
  preview: `<defs>${lg('a', '#7fa9e6', '#b7cdf0')}</defs>` + tile('#eef1f4') + `<rect x="4" y="4" width="42" height="42" rx="6" fill="url(#a)"/><path d="M4 27h42v13a6 6 0 0 1-6 6H10a6 6 0 0 1-6-6z" fill="#25406c"/><path d="M4 34c8-3 14 2 22 1v11H10a6 6 0 0 1-6-6z" fill="#c8b9a4"/><path d="M5 34l7 1 5 3 6 1" stroke="#f2f4f6" stroke-width="2" fill="none"/><path d="M28 35h18l5 16q-14 3-28 0z" fill="#c9ced1" stroke="#444" stroke-width=".8"/><path d="M31 40h12l2 8H29z" fill="#eef1f3"/><path d="M33 45l3-3 3 3 3-3" stroke="#445" fill="none"/><rect x="26" y="25" width="22" height="11" rx="3" fill="#0b0b0b"/><ellipse cx="37" cy="27" rx="10" ry="2" fill="#444"/>`,
  chromium: tile('#f7f7f7') + `<circle cx="25" cy="25" r="21.500" fill="#5c9af0"/><path d="M6.400 14.200A21.500 21.500 0 0 1 43.600 14.200H25L15.700 30.400z" fill="#2270d8"/><path d="M43.600 14.200A21.500 21.500 0 0 1 25 46.500L34.300 30.400 25 14.200z" fill="#8db9f8"/><circle cx="25" cy="25" r="10.500" fill="#fff"/><circle cx="25" cy="25" r="8.600" fill="#1f78e6"/>`,
  pdf: `<rect x="8" y="-5" width="20" height="8" fill="#e8e8f0"/><path d="M12-3.500h13" stroke="#9a8fd6" stroke-width="1.500"/><rect x="4" y="-2" width="37" height="57" rx="1" fill="#fafafa"/><path d="M7 2h20M7 4.500h14" stroke="#aaa" stroke-width="1"/><path d="M8 13.500h26" stroke="#c7cf4a" stroke-width="3"/><path d="M8 14.500h6M26 14.500h8" stroke="#4fa94a" stroke-width="2"/><path d="M7 18.500h29M7 43.500h31" stroke="#4994b8" stroke-width="1.800"/><path d="M8 22h26M8 25h20M8 32h24M8 35h18M8 38h22" stroke="#c5c9cf" stroke-width="1"/><path d="M27-2h14v18c-4-4-9-4-14-4z" fill="#d8cabb"/><path d="M27-2c1 8 0 12-1 14 6-1 11 1 15 4C35 12 29 6 27-2z" fill="#fff" stroke="#ccc" stroke-width=".5"/><text x="22.500" y="52" font-size="8" font-weight="600" text-anchor="middle" fill="#666">PDF</text>`,
  folder: `<path d="M-1 44V6q0-3 3-3h12l4 4h28q4 0 4 4v33z" fill="#1f97cd"/><path d="M-2.500 13q0-3 3-3h46q4 0 4 3v33q0 4-4 4h-45q-4 0-4-4z" fill="#6fcef8"/><path d="M-2.500 46h53" stroke="#51b6e3"/><path d="M-5 54c0-5 1-6 3-7l-2-2h7v7l-2-2c-2 1-2 2-3 4z" fill="#111" stroke="#ddd" stroke-width=".8"/>`,
  trash: `<defs><linearGradient id="a"><stop stop-color="#d4d8df"/><stop offset=".3" stop-color="#eceef1"/><stop offset=".8" stop-color="#e6e8ec"/><stop offset="1" stop-color="#bfc5cf"/></linearGradient></defs><path d="M1 3l5 46q1 5 17 5t17-5l5-46z" fill="url(#a)"/><ellipse cx="23" cy="3" rx="22" ry="5" fill="#c3cbd9" stroke="#f3f4f6" stroke-width="1.400"/>`,
};
define('dock-item', el => `<style>:host{display:block;position:relative;width:50px;height:50px;flex:none}svg{display:block;overflow:visible;font-family:Inter,sans-serif;filter:drop-shadow(0 1px 1px rgba(0,0,0,.25))}
:host([on]):after{content:"";position:absolute;left:20px;top:58px;width:8px;height:8px;border-radius:50%;background:#04091c}</style><svg width="50" height="50" viewBox="0 0 50 50">${DOCK[el.getAttribute('app')]}</svg>`);
define('dock-bar', `<style>:host{position:absolute;left:552px;top:1506px;width:1456px;height:84px;box-sizing:border-box;border:2px solid rgba(180,198,225,.45);border-radius:22px;padding:12px 12px 0;display:flex;gap:16px;z-index:6;
background:linear-gradient(90deg,#6d8fc0 0,#6b8cb9 12%,#5c7f93 24%,#5d7188 38%,#5e7390 55%,#65708b 62%,#716f89 74%,#6c83ad 84%,#6c8fc0 92%,#6a8fc2);box-shadow:0 0 70px rgba(0,0,0,.28)}
hr{width:2px;height:60px;border:0;margin:-2px 6px 0;background:#33435f;flex:none}</style>
<dock-item on app="finder"></dock-item><dock-item app="safari"></dock-item><dock-item app="launch"></dock-item><dock-item app="photos"></dock-item><dock-item app="cal"></dock-item><dock-item app="contacts"></dock-item><dock-item app="remind"></dock-item><dock-item app="notes"></dock-item><dock-item app="help"></dock-item><dock-item app="store"></dock-item><dock-item app="gear"></dock-item><dock-item app="wave"></dock-item><hr>
<dock-item on app="chrome"></dock-item><dock-item on app="code"></dock-item><dock-item on app="wave"></dock-item><dock-item on app="discord"></dock-item><dock-item on app="preview"></dock-item><dock-item on app="chromium"></dock-item><hr>
<dock-item app="pdf"></dock-item><dock-item app="folder"></dock-item><dock-item app="trash"></dock-item>`);

define('desk-top', `<style>:host{display:block;position:relative;width:2560px;height:1600px;overflow:hidden;background:linear-gradient(#3c659c,#4a74ae)}
.top{position:absolute;left:0;right:0;top:48px;height:60px;background:linear-gradient(#1c2b44 0 3px,#4a6fa5 3px)}
.back{position:absolute;left:742px;top:48px;width:1074px;height:1552px;background:#1f304f}
.shade{position:absolute;left:0;right:0;top:1470px;height:130px;background:linear-gradient(#090909 0 42px,rgba(16,26,42,.8) 44px,rgba(16,28,50,.5) 65px,rgba(20,40,80,.15) 100px,transparent)}</style>
<div class="top"></div><div class="back"></div><div class="shade"></div><menu-bar></menu-bar><browser-window></browser-window><dock-bar></dock-bar>`);
</script>
</body>
</html>
